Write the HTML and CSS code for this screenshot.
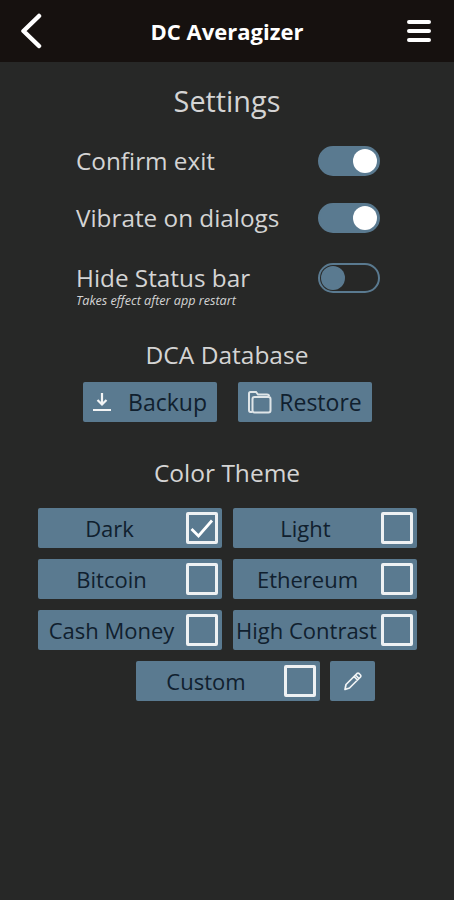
FILE: index.html
```html
<!DOCTYPE html>
<html>
  <head>
    <title>DC Averagizer Settings</title>
    <link rel="stylesheet" href="styles.css">
  </head>
  <body>
    <div class="topbar">
      <svg class="back" width="24" height="36" viewBox="0 0 24 36">
        <path d="M20 3 L4.500 18 L20 33" fill="none" stroke="#fff" stroke-width="4.500" stroke-linecap="round" stroke-linejoin="round"/>
      </svg>
      <div class="apptitle">DC Averagizer</div>
      <svg class="menu" width="26" height="24" viewBox="0 0 26 24">
        <path d="M3 3 H23 M3 12 H23 M3 21 H23" fill="none" stroke="#fff" stroke-width="4" stroke-linecap="round"/>
      </svg>
    </div>

    <h1>Settings</h1>

    <div class="settings">
      <div class="setting">
        <div class="label">Confirm exit</div>
        <div class="toggle on"><span class="knob"></span></div>
      </div>
      <div class="setting second">
        <div class="label">Vibrate on dialogs</div>
        <div class="toggle on"><span class="knob"></span></div>
      </div>
      <div class="setting last">
        <div>
          <div class="label">Hide Status bar</div>
          <div class="hint">Takes effect after app restart</div>
        </div>
        <div class="toggle"><span class="knob"></span></div>
      </div>
    </div>

    <h2 class="dbtitle">DCA Database</h2>
    <div class="dbbuttons">
      <div class="btn">
        <svg width="20" height="20" viewBox="0 0 20 20">
          <path d="M10 1 V12 M5.500 8 L10 12.500 L14.500 8 M1 18 H19" fill="none" stroke="#f2f4f5" stroke-width="2.200"/>
        </svg>
        <span class="backuptext">Backup</span>
      </div>
      <div class="btn">
        <svg width="26" height="26" viewBox="0 0 26 26">
          <path d="M5 23 H3.500 Q2 23 2 21 V4.500 Q2 3 3.500 3 H9 L11 5.500 H20 Q22 5.500 22 7" fill="none" stroke="#dfe5e8" stroke-width="2"/>
          <rect x="5.500" y="8" width="18" height="15.500" rx="2" fill="none" stroke="#dfe5e8" stroke-width="2"/>
        </svg>
        <span>Restore</span>
      </div>
    </div>

    <h2 class="themetitle">Color Theme</h2>
    <div class="themes">
      <div class="theme">
        <span class="name dark">Dark</span>
        <span class="check">
          <svg width="25" height="25" viewBox="0 0 25 25">
            <path d="M2.500 13 L9.500 20 L23 4.500" fill="none" stroke="#fff" stroke-width="2.800"/>
          </svg>
        </span>
      </div>
      <div class="theme"><span class="name light">Light</span><span class="check"></span></div>
      <div class="theme"><span class="name">Bitcoin</span><span class="check"></span></div>
      <div class="theme"><span class="name ethereum">Ethereum</span><span class="check"></span></div>
      <div class="theme"><span class="name">Cash Money</span><span class="check"></span></div>
      <div class="theme"><span class="name">High Contrast</span><span class="check"></span></div>
    </div>
    <div class="customrow">
      <div class="theme"><span class="name custom">Custom</span><span class="check"></span></div>
      <div class="edit">
        <svg width="20" height="22" viewBox="0 0 20 22">
          <path d="M3 14.500 L12.500 5 L16 8.500 L6.500 18 L2 19.500 Z M11 6.500 L14.500 10 M12.500 5 L14 3.500 Q15 2.700 16 3.500 L17.500 5 Q18.300 6 17.500 7 L16 8.500" fill="none" stroke="#f2f4f5" stroke-width="1.700" stroke-linejoin="round"/>
        </svg>
      </div>
    </div>
  </body>
</html>
```

FILE: styles.css
```css
body {
  margin: 0;
  background-color: #272827;
  font-family: "Open Sans", sans-serif;
  color: #d4d4d4;
}

.topbar {
  display: flex;
  align-items: center;
  justify-content: space-between;
  height: 62px;
  padding: 0 22px 0 19px;
  background-color: #16110f;
}

.apptitle {
  margin-left: 5px;
  color: #fff;
  font-size: 22px;
  font-weight: 700;
}

h1 {
  margin: 19px 0 0;
  height: 40px;
  line-height: 40px;
  font-size: 28.800px;
  font-weight: 400;
  text-align: center;
}

h2 {
  margin: 0;
  font-size: 24.500px;
  font-weight: 400;
  line-height: 32px;
  text-align: center;
}

.settings {
  margin-top: 25px;
  padding: 0 74px 0 76px;
}

.setting {
  display: flex;
  align-items: center;
  justify-content: space-between;
  height: 30px;
  margin-bottom: 27px;
}

.setting.second {
  margin-bottom: 30px;
}

.setting.last {
  align-items: flex-start;
  margin-bottom: 0;
  height: 46px;
}

.label {
  font-size: 24.300px;
  line-height: 30px;
}

.hint {
  font-size: 12.600px;
  font-style: italic;
  line-height: 16px;
}

.toggle {
  box-sizing: border-box;
  display: flex;
  align-items: center;
  width: 62px;
  height: 30px;
  padding: 0 1px;
  border: 2px solid #5a7a90;
  border-radius: 15px;
}

.toggle.on {
  justify-content: flex-end;
  background-color: #5a7a90;
}

.knob {
  width: 24px;
  height: 24px;
  border-radius: 50%;
  background-color: #5a7a90;
}

.on .knob {
  background-color: #fff;
}

.dbtitle {
  margin-top: 30px;
}

.dbbuttons {
  display: flex;
  justify-content: center;
  gap: 21px;
  margin-top: 11px;
}

.btn {
  box-sizing: border-box;
  display: flex;
  align-items: center;
  justify-content: center;
  gap: 6px;
  width: 134px;
  height: 40px;
  border-radius: 2px;
  background-color: #5a7a90;
  color: #10202e;
  font-size: 23px;
}

.backuptext {
  margin-left: 10px;
}

.themetitle {
  margin-top: 35px;
}

.themes {
  display: grid;
  grid-template-columns: 184px 184px;
  gap: 11px;
  justify-content: center;
  margin-top: 19px;
}

.theme {
  box-sizing: border-box;
  display: flex;
  align-items: center;
  height: 40px;
  padding-right: 4px;
  border-radius: 2px;
  background-color: #5a7a90;
  color: #10202e;
  font-size: 22px;
}

.name {
  flex: 1;
  text-align: center;
  white-space: nowrap;
}

.name.dark {
  padding-right: 4px;
}

.name.light {
  padding-right: 2px;
}

.name.ethereum {
  padding-left: 2px;
}

.name.custom {
  padding-right: 8px;
}

.check {
  box-sizing: border-box;
  display: flex;
  align-items: center;
  justify-content: center;
  flex: none;
  width: 32px;
  height: 32px;
  border: 3px solid #eef1f3;
  border-radius: 2px;
}

.customrow {
  display: flex;
  gap: 10px;
  margin: 11px 0 0 136px;
}

.customrow .theme {
  width: 184px;
}

.edit {
  display: flex;
  align-items: center;
  justify-content: center;
  width: 45px;
  height: 40px;
  border-radius: 2px;
  background-color: #5a7a90;
}
```
